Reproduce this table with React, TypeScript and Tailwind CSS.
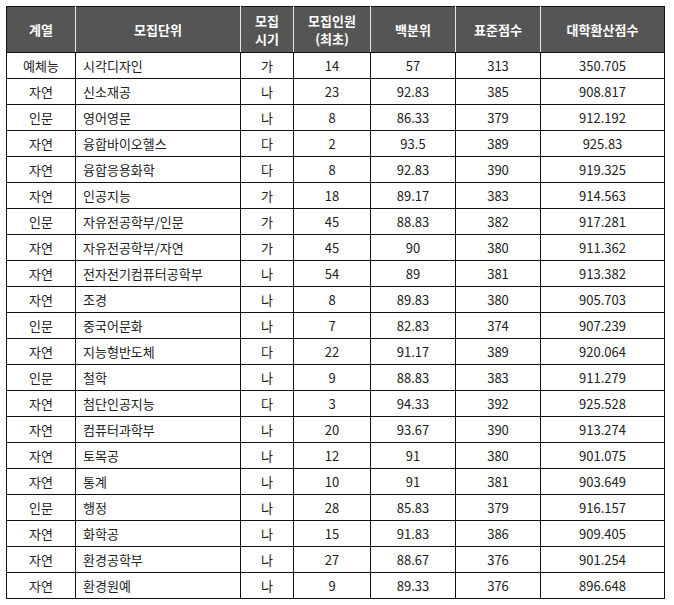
const rows: [string, string, string, string, string, string, string][] = [
  ["예체능", "시각디자인", "가", "14", "57", "313", "350.705"],
  ["자연", "신소재공", "나", "23", "92.83", "385", "908.817"],
  ["인문", "영어영문", "나", "8", "86.33", "379", "912.192"],
  ["자연", "융합바이오헬스", "다", "2", "93.5", "389", "925.83"],
  ["자연", "융합응용화학", "다", "8", "92.83", "390", "919.325"],
  ["자연", "인공지능", "가", "18", "89.17", "383", "914.563"],
  ["인문", "자유전공학부/인문", "가", "45", "88.83", "382", "917.281"],
  ["자연", "자유전공학부/자연", "가", "45", "90", "380", "911.362"],
  ["자연", "전자전기컴퓨터공학부", "나", "54", "89", "381", "913.382"],
  ["자연", "조경", "나", "8", "89.83", "380", "905.703"],
  ["인문", "중국어문화", "나", "7", "82.83", "374", "907.239"],
  ["자연", "지능형반도체", "다", "22", "91.17", "389", "920.064"],
  ["인문", "철학", "나", "9", "88.83", "383", "911.279"],
  ["자연", "첨단인공지능", "다", "3", "94.33", "392", "925.528"],
  ["자연", "컴퓨터과학부", "나", "20", "93.67", "390", "913.274"],
  ["자연", "토목공", "나", "12", "91", "380", "901.075"],
  ["자연", "통계", "나", "10", "91", "381", "903.649"],
  ["인문", "행정", "나", "28", "85.83", "379", "916.157"],
  ["자연", "화학공", "나", "15", "91.83", "386", "909.405"],
  ["자연", "환경공학부", "나", "27", "88.67", "376", "901.254"],
  ["자연", "환경원예", "나", "9", "89.33", "376", "896.648"],
];

const widths = ["w-[69px]", "w-[165px]", "w-[53px]", "w-[77px]", "w-[85px]", "w-[85px]", "w-[124px]"];

export default function App() {
  return (
    <div className="min-h-[605px] bg-white pl-[6px] pt-[6px] font-['Noto_Sans_CJK_KR',sans-serif] text-[13px] text-[#222]">
      <table className="w-[659px] table-fixed border-collapse border border-[#111]">
        <colgroup>
          {widths.map((w, i) => (
            <col key={i} className={w} />
          ))}
        </colgroup>
        <thead>
          <tr className="h-[46px] bg-[#555] font-bold text-white">
            <th className="border-r border-b border-r-[#e5e5e5] border-b-[#111] leading-[18px]">계열</th>
            <th className="border-r border-b border-r-[#e5e5e5] border-b-[#111] leading-[18px]">모집단위</th>
            <th className="border-r border-b border-r-[#e5e5e5] border-b-[#111] leading-[18px]">
              모집
              <br />
              시기
            </th>
            <th className="border-r border-b border-r-[#e5e5e5] border-b-[#111] leading-[18px]">
              모집인원
              <br />
              (최초)
            </th>
            <th className="border-r border-b border-r-[#e5e5e5] border-b-[#111] leading-[18px]">백분위</th>
            <th className="border-r border-b border-r-[#e5e5e5] border-b-[#111] leading-[18px]">표준점수</th>
            <th className="border-b border-b-[#111] leading-[18px]">대학환산점수</th>
          </tr>
        </thead>
        <tbody>
          {rows.map((r, i) => (
            <tr key={i} className="h-[26px]">
              {r.map((c, j) => (
                <td
                  key={j}
                  className={
                    j === 1
                      ? "border border-[#111] px-[7px] text-left leading-[18px]"
                      : "border border-[#111] text-center leading-[18px]"
                  }
                >
                  {c}
                </td>
              ))}
            </tr>
          ))}
        </tbody>
      </table>
    </div>
  );
}
